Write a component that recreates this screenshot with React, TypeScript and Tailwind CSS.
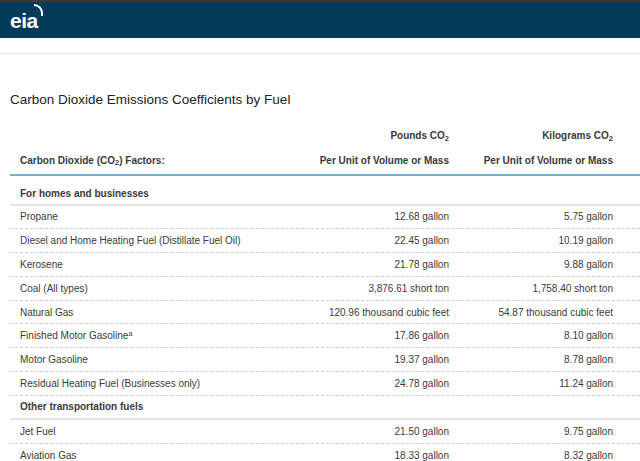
import React from "react";

const rows: (string | [string, string, string, boolean?])[] = [
  "For homes and businesses",
  ["Propane", "12.68 gallon", "5.75 gallon"],
  ["Diesel and Home Heating Fuel (Distillate Fuel Oil)", "22.45 gallon", "10.19 gallon"],
  ["Kerosene", "21.78 gallon", "9.88 gallon"],
  ["Coal (All types)", "3,876.61 short ton", "1,758.40 short ton"],
  ["Natural Gas", "120.96 thousand cubic feet", "54.87 thousand cubic feet"],
  ["Finished Motor Gasoline", "17.86 gallon", "8.10 gallon", true],
  ["Motor Gasoline", "19.37 gallon", "8.78 gallon"],
  ["Residual Heating Fuel (Businesses only)", "24.78 gallon", "11.24 gallon"],
  "Other transportation fuels",
  ["Jet Fuel", "21.50 gallon", "9.75 gallon"],
  ["Aviation Gas", "18.33 gallon", "8.32 gallon"],
];

const grid = "grid grid-cols-[290px_155px_164px_1fr]";

export default function App() {
  return (
    <div className="w-[640px] h-[461px] overflow-hidden bg-white text-[#3a3a3a]" style={{ fontFamily: '"Liberation Sans", Arial, sans-serif' }}>
      <div className="h-[2px] bg-[#3a3a3a]" />
      <div className="h-[36px] bg-[#033c5a] flex items-center pl-[10px]">
        <span className="text-white text-[21px] font-bold tracking-tight relative leading-none">
          eia
          <span className="absolute -right-[5px] -top-[6px] w-[9px] h-[12px] border-r-2 border-t-2 border-white rounded-tr-full" />
        </span>
      </div>
      <div className="h-[14px]" />
      <div className="h-[3px] bg-[#f3f3f3]" />
      <div className="pl-[10px] pt-[38px]">
        <h1 className="text-[13.5px] text-[#222] leading-none mb-[18px]">Carbon Dioxide Emissions Coefficients by Fuel</h1>
        <div className={`${grid} text-[10px] font-bold h-[22px] items-center`}>
          <div />
          <div className="text-right pr-[6px]">Pounds CO<sub>2</sub></div>
          <div className="text-right pr-[6px]">Kilograms CO<sub>2</sub></div>
          <div />
        </div>
        <div className={`${grid} text-[10px] font-bold h-[29px] items-center border-b-2 border-[#6fb0e0]`}>
          <div className="pl-[10px]">Carbon Dioxide (CO<sub>2</sub>) Factors:</div>
          <div className="text-right pr-[6px]">Per Unit of Volume or Mass</div>
          <div className="text-right pr-[6px]">Per Unit of Volume or Mass</div>
          <div />
        </div>
        {rows.map((r, i) =>
          typeof r === "string" ? (
            <div key={i} className={`${i === 0 ? "h-[30px] pt-[7px]" : "h-[24px]"} flex items-center pl-[10px] text-[10px] font-bold border-b-2 border-[#e6e6e6]`}>{r}</div>
          ) : (
            <div key={i} className={`${grid} h-[23.8px] items-center text-[10px] border-b border-dashed border-[#ccc]`}>
              <div className="pl-[10px]">{r[0]}{r[3] && <sup className="text-[7px]">a</sup>}</div>
              <div className="text-right pr-[6px]">{r[1]}</div>
              <div className="text-right pr-[6px]">{r[2]}</div>
              <div />
            </div>
          )
        )}
      </div>
    </div>
  );
}
